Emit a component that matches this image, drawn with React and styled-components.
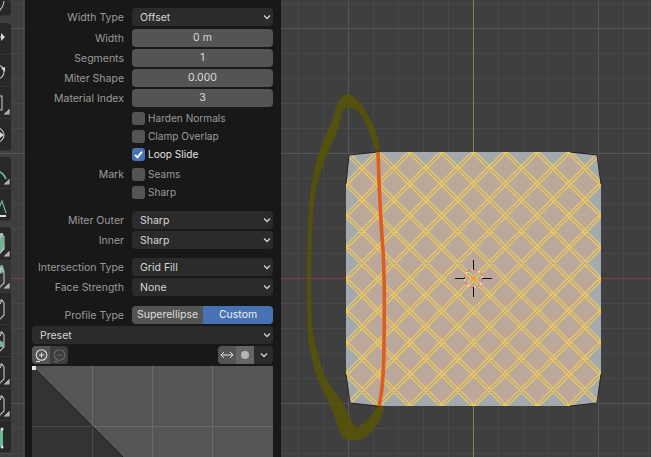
import React from 'react'
import styled, { createGlobalStyle, css } from 'styled-components'

const GlobalStyle = createGlobalStyle`
  html, body {
    margin: 0;
    width: 651px;
    height: 457px;
    overflow: hidden;
    background: #181818;
  }
`;

// grid lines are pinned to the window so the strip and the viewport line up
const gridLines = css`
  background-color: #3f3f3f;
  background-attachment: fixed;
  background-image:
    linear-gradient(to right, #555 1px, transparent 1px),
    linear-gradient(to bottom, #555 1px, transparent 1px),
    linear-gradient(to right, #484848 1px, transparent 1px),
    linear-gradient(to bottom, #484848 1px, transparent 1px);
  background-size: 125px 125px, 125px 125px, 25px 25px, 25px 25px;
  background-position: 98px 0, 0 28px, 23px 0, 0 3px;
`;

const Screen = styled.div`
  display: flex;
  width: 651px;
  height: 457px;
  overflow: hidden;
  font-family: Inter, "Liberation Sans", sans-serif;
  font-size: 10.5px;
`;

const ToolStrip = styled.div`
  flex: none;
  width: 11px;
  height: 457px;
  display: flex;
  flex-direction: column;
  align-items: flex-end;
  overflow: hidden;
  background: #3f3f3f;
  ${gridLines}
`;

const ToolGroup = styled.div`
  flex: none;
  width: 32px;
  margin-top: ${p => p.$top || 0}px;
  background: #282828;
  border-radius: 0 4px 4px 0;
  overflow: hidden;
`;

const ToolButton = styled.div`
  display: block;
  height: ${p => p.$h || 32}px;
  background: ${p => (p.$active ? '#333' : 'transparent')};
  border-bottom: 1px solid #343434;
  box-sizing: border-box;

  svg {
    display: block;
  }
`;

const GridGutter = styled.div`
  flex: none;
  width: 14px;
  height: 457px;
  ${gridLines}
  position: relative;
`;

const GutterAxis = styled.div`
  position: absolute;
  left: 1px;
  right: 0;
  top: 278px;
  height: 1px;
  background: #8a3a44;
`;

const Panel = styled.div`
  flex: none;
  width: 256px;
  height: 457px;
  box-sizing: border-box;
  padding: 8px 8px 0 7px;
  background: #181818;
  overflow: hidden;
`;

const Row = styled.div`
  display: grid;
  grid-template-columns: 92px 141px;
  column-gap: 8px;
  align-items: center;
  height: 18px;
  margin-top: ${p => p.$top ?? 2}px;
`;

const Label = styled.div`
  text-align: right;
  color: #9b9b9b;
  white-space: nowrap;
`;

const Select = styled.div`
  display: flex;
  align-items: center;
  justify-content: space-between;
  height: 18px;
  box-sizing: border-box;
  padding: 0 1px 0 8px;
  background: #2b2b2b;
  border-radius: 4px;
  color: #d6d6d6;
`;

const WideSelect = styled(Select)`
  margin-top: 2px;
  width: 241px;
`;

const NumberField = styled.div`
  height: 18px;
  line-height: 18px;
  text-align: center;
  background: #545454;
  border-radius: 4px;
  color: #dcdcdc;
`;

const CheckRow = styled.div`
  display: flex;
  align-items: center;
  gap: 3px;
  font-size: 10.1px;
  color: ${p => (p.$on ? '#e2e2e2' : '#9a9a9a')};
`;

const Box = styled.div`
  flex: none;
  width: 13px;
  height: 13px;
  border-radius: 3px;
  background: ${p => (p.$on ? '#4772b3' : '#545454')};

  svg {
    display: block;
  }
`;

const Segmented = styled.div`
  display: grid;
  grid-template-columns: 71px 70px;
  height: 18px;
  border-radius: 4px;
  overflow: hidden;
`;

const Segment = styled.div`
  line-height: 18px;
  text-align: center;
  color: ${p => (p.$on ? '#f0f0f0' : '#dcdcdc')};
  background: ${p => (p.$on ? '#4772b3' : '#545454')};
`;

const CurveBar = styled.div`
  display: flex;
  justify-content: space-between;
  width: 241px;
  height: 18px;
  margin-top: 2px;
`;

const IconGroup = styled.div`
  display: flex;
  border-radius: 4px;
  overflow: hidden;
`;

const IconButton = styled.div`
  display: flex;
  align-items: center;
  justify-content: center;
  width: ${p => p.$w || 18}px;
  background: ${p => p.$bg};
`;

const CurveBox = styled.div`
  width: 241px;
  height: 241px;
  margin-top: 2px;

  svg {
    display: block;
  }
`;

const Viewport = styled.div`
  flex: none;
  width: 370px;
  height: 457px;
  ${gridLines}

  svg {
    display: block;
  }
`;

const Chevron = () => (
  <svg width="10" height="10" viewBox="0 0 10 10" fill="none" stroke="#d0d0d0" strokeWidth="1.3">
    <path d="M2 3.5 L5 6.5 L8 3.5" />
  </svg>
);

const Drop = ({ children }) => (
  <Select>
    {children}
    <Chevron />
  </Select>
);

const Check = ({ on, children }) => (
  <CheckRow $on={on}>
    <Box $on={on}>
      {on && (
        <svg width="13" height="13" viewBox="0 0 13 13" fill="none" stroke="#fff" strokeWidth="1.8">
          <path d="M3 6.8 L5.5 9.3 L10 3.6" />
        </svg>
      )}
    </Box>
    {children}
  </CheckRow>
);

const Corner = ({ h }) => <polygon points={`5,${h - 5} 9,${h - 9} 9,${h - 5}`} fill="#8a8a8a" />;

const ToolIcon = ({ h = 32, corner, children }) => (
  <svg width="32" height={h} viewBox={`-21 0 32 ${h}`} fill="none" stroke="#c4c4c4" strokeWidth="1.1">
    {children}
    {corner && <Corner h={h} />}
  </svg>
);

const Shell = ({ fill }) => (
  <>
    {fill && <path d={fill} fill="#6cb892" stroke="none" />}
    <path d="M-8 9 L2 7 L4 10 L4 22 L-1 27 L-8 24" />
    <path d="M2 7 L0 11" />
  </>
);

const tools = [
  {
    top: 0,
    items: [
      {
        h: 16,
        icon: (
          <>
            <path d="M-4 11 Q3 10 4 1" />
            <path d="M-4 12 Q-1 12 1 10" stroke="#c0525a" />
          </>
        ),
      },
    ],
  },
  {
    top: 7,
    items: [
      { icon: <><path d="M-6 14 H1" /><polygon points="1,10 5,14 1,18" fill="#d8d8d8" stroke="none" /></> },
      { icon: <><circle cx="-3" cy="17" r="7" /><polygon points="1,13 5,12 5,17" fill="#d8d8d8" stroke="none" /></>  },
      { corner: true, icon: <rect x="-10" y="9" width="12" height="14" /> },
      { icon: <><circle cx="-3" cy="16" r="7" /><polygon points="0,13 4,16 0,19" fill="#d8d8d8" stroke="none" /></> },
    ],
  },
  {
    top: 6,
    items: [
      { corner: true, icon: <path d="M-6 14 Q2 13 6 22" stroke="#6fc29a" strokeWidth="1.5" /> },
      {
        icon: (
          <>
            <path d="M-3 24 L2 12 L6 24" stroke="#6fc29a" />
            <path d="M-4 27 H6" stroke="#e0e0e0" strokeWidth="2" />
          </>
        ),
      },
    ],
  },
  {
    top: 6,
    items: [
      { h: 34, corner: true, icon: <Shell fill="M-4 6 L3 6 L4 22 L0 27 Z" /> },
      { active: true, corner: true, icon: <Shell fill="M-3 5 L3 4 L4 11 L0 13 Z" /> },
      { icon: <Shell /> },
      { icon: <Shell fill="M-1 15 L3 17 L4 22 L-1 22 Z" /> },
      { corner: true, icon: <Shell /> },
      { corner: true, icon: <Shell /> },
      {
        icon: (
          <>
            <rect x="-2" y="9" width="5" height="16" fill="#6cb892" stroke="none" />
            <circle cx="2" cy="8" r="1.5" fill="#e0e0e0" stroke="none" />
            <circle cx="2" cy="26" r="1.5" fill="#e0e0e0" stroke="none" />
          </>
        ),
      },
    ],
  },
];

// mesh outline, everything in window coordinates
const L = 346;
const R = 601;
const T = 152;
const B = 406;
const S = (R - L) / 8;
const SY = (B - T) / 8;

const outline = [
  [349, 155], [L + S, T], [R - S, T], [597, 155], [R, T + SY],
  [R, B - SY], [597, 403], [R - S, B], [L + S, B], [350, 403], [L, B - SY], [L, T + SY],
];

const toPoints = pts => pts.map(p => p.join(',')).join(' ');

const zigzag = () => {
  const pts = [];
  for (let i = 0; i < 8; i++) pts.push([L + i * S, T], [L + (i + 0.5) * S, T + SY / 2]);
  for (let i = 0; i < 8; i++) pts.push([R, T + i * SY], [R - S / 2, T + (i + 0.5) * SY]);
  for (let i = 0; i < 8; i++) pts.push([R - i * S, B], [R - (i + 0.5) * S, B - SY / 2]);
  for (let i = 0; i < 8; i++) pts.push([L, B - i * SY], [L + S / 2, B - (i + 0.5) * SY]);
  return pts;
};

// a bevelled edge: two parallel lines that meet at both ends
const doubled = (a, b, side) => {
  const len = Math.hypot(b[0] - a[0], b[1] - a[1]);
  const dx = (b[0] - a[0]) / len;
  const dy = (b[1] - a[1]) / len;
  const nx = -dy * side * 1.5;
  const ny = dx * side * 1.5;
  const p = [a[0] + dx * 4 + nx, a[1] + dy * 4 + ny];
  const q = [b[0] - dx * 4 + nx, b[1] - dy * 4 + ny];
  return `M${a} L${p} L${q} L${b}`;
};

const diagonals = () => {
  const out = [];
  for (let i = -7; i <= 7; i++) {
    const a = i >= 0 ? [L + i * S, T] : [L, T - i * SY];
    const b = i >= 0 ? [R, B - i * SY] : [R + i * S, B];
    const flip = p => [L + R - p[0], p[1]];
    [1, -1].forEach(side => {
      out.push(doubled(a, b, side));
      out.push(doubled(flip(a), flip(b), side));
    });
  }
  return out.join(' ');
};

// closed smooth shape through the given points
const smooth = pts => {
  const mid = (a, b) => [(a[0] + b[0]) / 2, (a[1] + b[1]) / 2];
  let d = `M${mid(pts[pts.length - 1], pts[0])}`;
  pts.forEach((p, i) => {
    d += ` Q${p} ${mid(p, pts[(i + 1) % pts.length])}`;
  });
  return d + ' Z';
};

const brush = smooth([
  [380, 150], [378, 138], [372, 122], [363, 106], [352, 95], [346, 93], [338, 100], [335, 110],
  [332, 123], [326, 133], [317, 157], [310, 190], [308, 223], [307, 260], [307, 333], [310, 350],
  [317, 380], [328, 400], [335, 417], [341, 438], [352, 441], [364, 439], [375, 428], [381, 418], [385, 406],
  [378, 405], [372, 415], [362, 425], [355, 428], [350, 418], [342, 400], [325, 380], [317, 350],
  [312, 333], [311, 280], [312, 223], [315, 190], [325, 157], [337, 133], [340, 123], [342, 110],
  [348, 107], [354, 108], [363, 116], [372, 140], [376, 152],
]);

const Scene = () => (
  <svg width="370" height="457" viewBox="281 0 370 457" fill="none">
    <defs>
      <clipPath id="meshClip">
        <polygon points={toPoints(outline)} />
      </clipPath>
    </defs>
    <path d="M281 278.5 H651" stroke="#8a3a44" />
    <path d="M473.5 0 V457" stroke="#6f9440" />
    <polygon points={toPoints(outline)} fill="#a4a9ae" />
    <polygon points={toPoints(zigzag())} fill="#bba89b" />
    <path d={diagonals()} stroke="#efcc55" strokeWidth="1.15" clipPath="url(#meshClip)" />
    <path d="M346 184 L349 155 L378 152 M570 152 L597 155 L601 184 M601 374 L597 403 L570 406 M378 406 L350 403 L346 374" stroke="#222" strokeWidth="1" />
    <path d="M378 152 Q380 215 383 250 Q385 285 384 340 Q384 385 379 406" stroke="#dc5d1d" strokeWidth="3.6" />
    <path d={brush} fill="#5a5600" fillOpacity="0.78" />
    <circle cx="473.5" cy="278.5" r="9" stroke="#efe6e0" strokeWidth="1.2" />
    <circle cx="473.5" cy="278.5" r="9" stroke="#d9665a" strokeWidth="1.2" strokeDasharray="4 3.1" />
    <path d="M455 278.5 H465 M482 278.5 H492 M473.5 260 V270 M473.5 287 V297" stroke="#111" strokeWidth="1" />
    <circle cx="473.5" cy="278.5" r="2.5" fill="#f0a030" />
  </svg>
);

const Curve = () => (
  <svg width="241" height="241" viewBox="0 0 241 241" fill="none">
    <rect width="241" height="241" fill="#555" />
    <path d="M60.5 0 V241 M120.5 0 V241 M180.5 0 V241 M0 60.5 H241" stroke="#6a6a6a" />
    <polygon points="1,1 241,241 0,241 0,1" fill="#333" />
    <path d="M60.5 60 V241 M0 60.5 H60" stroke="#4a4a4a" />
    <path d="M1 1 L241 241" stroke="#1c1c1c" />
    <rect x="0" y="0" width="4" height="4" fill="#e8e8e8" />
  </svg>
);

const ZoomIcon = ({ color, plus }) => (
  <svg width="15" height="15" viewBox="0 0 15 15" fill="none" stroke={color} strokeWidth="1.1">
    <circle cx="7.5" cy="7" r="5.3" />
    <path d={plus ? 'M5 7 H10 M7.5 4.5 V9.5' : 'M5 7 H10'} />
    <path d="M2 13.5 H6" />
  </svg>
);

export default function App() {
  return (
    <Screen>
      <GlobalStyle />
      <ToolStrip>
        {tools.map((group, g) => (
          <ToolGroup key={g} $top={group.top}>
            {group.items.map((t, i) => (
              <ToolButton key={i} $h={t.h} $active={t.active}>
                <ToolIcon h={t.h} corner={t.corner}>{t.icon}</ToolIcon>
              </ToolButton>
            ))}
          </ToolGroup>
        ))}
      </ToolStrip>
      <GridGutter>
        <GutterAxis />
      </GridGutter>
      <Panel>
        <Row $top={0}><Label>Width Type</Label><Drop>Offset</Drop></Row>
        <Row $top={3}><Label>Width</Label><NumberField>0 m</NumberField></Row>
        <Row><Label>Segments</Label><NumberField>1</NumberField></Row>
        <Row><Label>Miter Shape</Label><NumberField>0.000</NumberField></Row>
        <Row><Label>Material Index</Label><NumberField>3</NumberField></Row>
        <Row><span /><Check>Harden Normals</Check></Row>
        <Row $top={0}><span /><Check>Clamp Overlap</Check></Row>
        <Row $top={0}><span /><Check on>Loop Slide</Check></Row>
        <Row><Label>Mark</Label><Check>Seams</Check></Row>
        <Row $top={0}><span /><Check>Sharp</Check></Row>
        <Row $top={10}><Label>Miter Outer</Label><Drop>Sharp</Drop></Row>
        <Row><Label>Inner</Label><Drop>Sharp</Drop></Row>
        <Row $top={9}><Label>Intersection Type</Label><Drop>Grid Fill</Drop></Row>
        <Row><Label>Face Strength</Label><Drop>None</Drop></Row>
        <Row $top={10}>
          <Label>Profile Type</Label>
          <Segmented>
            <Segment>Superellipse</Segment>
            <Segment $on>Custom</Segment>
          </Segmented>
        </Row>
        <WideSelect>Preset<Chevron /></WideSelect>
        <CurveBar>
          <IconGroup>
            <IconButton $bg="#545454"><ZoomIcon color="#e0e0e0" plus /></IconButton>
            <IconButton $bg="#3d3d3d"><ZoomIcon color="#6a6a6a" /></IconButton>
          </IconGroup>
          <IconGroup>
            <IconButton $bg="#545454">
              <svg width="14" height="10" viewBox="0 0 14 10" fill="none" stroke="#e0e0e0" strokeWidth="1">
                <path d="M1 5 H13 M4 2 L1 5 L4 8 M10 2 L13 5 L10 8" />
              </svg>
            </IconButton>
            <IconButton $bg="#666">
              <svg width="10" height="10" viewBox="0 0 10 10">
                <circle cx="5" cy="5" r="4" fill="#b5b5b5" />
              </svg>
            </IconButton>
            <IconButton $bg="#2b2b2b" $w={19}><Chevron /></IconButton>
          </IconGroup>
        </CurveBar>
        <CurveBox><Curve /></CurveBox>
      </Panel>
      <Viewport>
        <Scene />
      </Viewport>
    </Screen>
  );
}
